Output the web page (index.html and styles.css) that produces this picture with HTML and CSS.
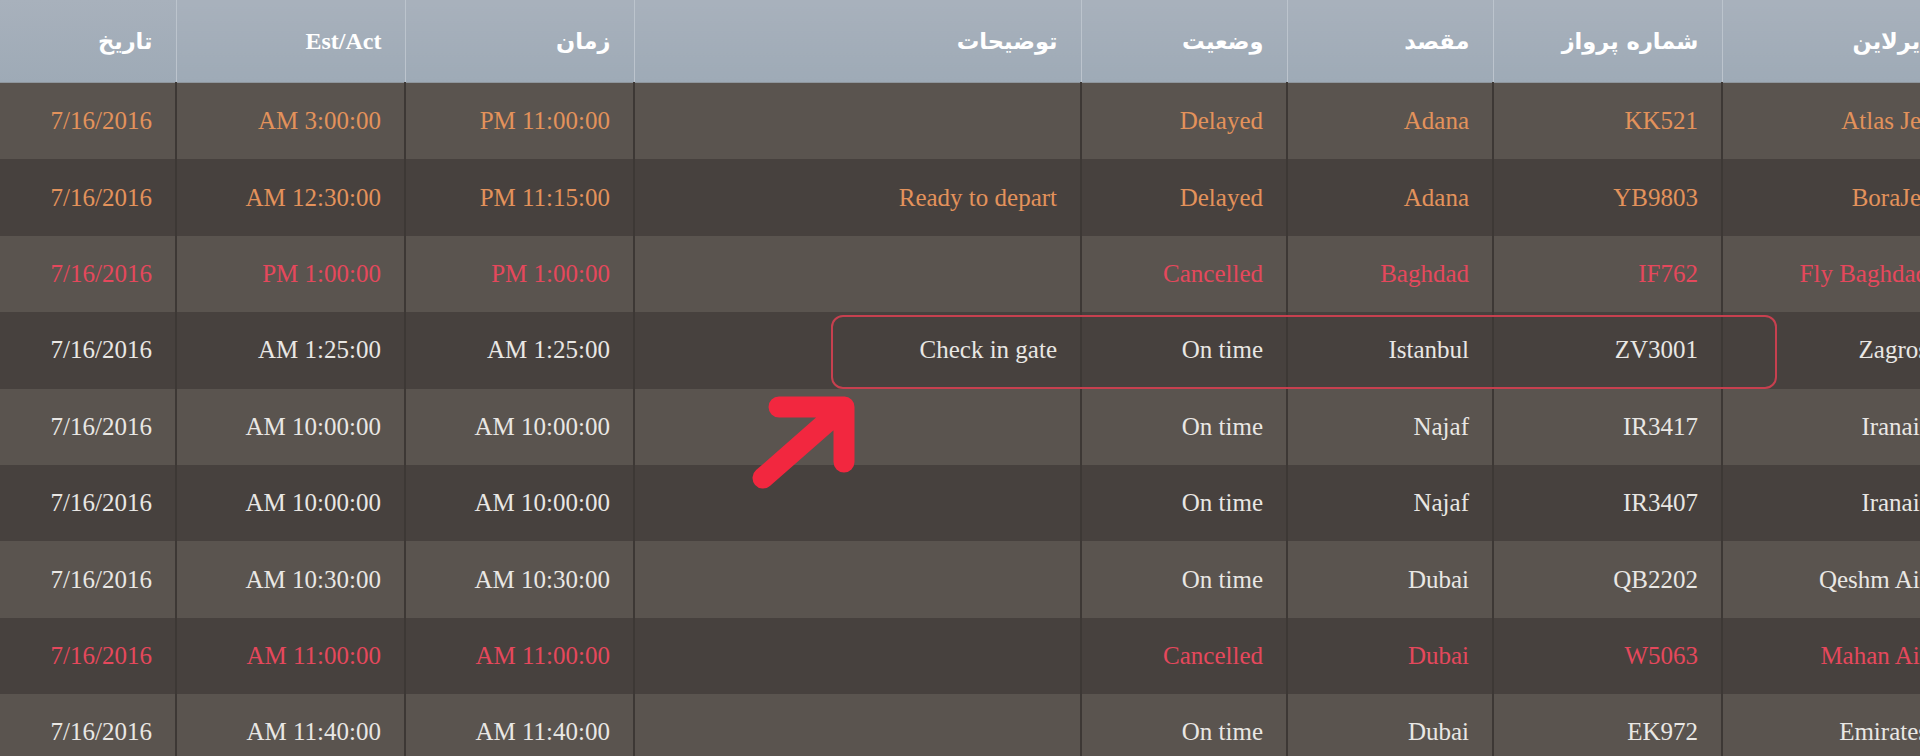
FILE: index.html
```html
<!DOCTYPE html>
<html lang="fa">
<head>
<meta charset="utf-8">
<title>Flights</title>
<link rel="stylesheet" href="styles.css">
</head>
<body>
<div class="board">
  <table class="flights" dir="rtl">
    <colgroup>
      <col class="c-airline"><col class="c-flight"><col class="c-dest"><col class="c-status">
      <col class="c-notes"><col class="c-time"><col class="c-est"><col class="c-date">
    </colgroup>
    <thead>
      <tr>
        <th>ایرلاین</th>
        <th>شماره پرواز</th>
        <th>مقصد</th>
        <th>وضعیت</th>
        <th>توضیحات</th>
        <th>زمان</th>
        <th class="latin">Est/Act</th>
        <th>تاریخ</th>
      </tr>
    </thead>
    <tbody>
      <tr class="light delayed">
        <td>Atlas Jet</td><td>KK521</td><td>Adana</td><td>Delayed</td><td></td><td>PM 11:00:00</td><td>AM 3:00:00</td><td>7/16/2016</td>
      </tr>
      <tr class="dark delayed">
        <td>BoraJet</td><td>YB9803</td><td>Adana</td><td>Delayed</td><td>Ready to depart</td><td>PM 11:15:00</td><td>AM 12:30:00</td><td>7/16/2016</td>
      </tr>
      <tr class="light cancelled">
        <td>Fly Baghdad</td><td>IF762</td><td>Baghdad</td><td>Cancelled</td><td></td><td>PM 1:00:00</td><td>PM 1:00:00</td><td>7/16/2016</td>
      </tr>
      <tr class="dark">
        <td>Zagros</td><td>ZV3001</td><td>Istanbul</td><td>On time</td><td>Check in gate</td><td>AM 1:25:00</td><td>AM 1:25:00</td><td>7/16/2016</td>
      </tr>
      <tr class="light">
        <td>Iranair</td><td>IR3417</td><td>Najaf</td><td>On time</td><td></td><td>AM 10:00:00</td><td>AM 10:00:00</td><td>7/16/2016</td>
      </tr>
      <tr class="dark">
        <td>Iranair</td><td>IR3407</td><td>Najaf</td><td>On time</td><td></td><td>AM 10:00:00</td><td>AM 10:00:00</td><td>7/16/2016</td>
      </tr>
      <tr class="light">
        <td>Qeshm Air</td><td>QB2202</td><td>Dubai</td><td>On time</td><td></td><td>AM 10:30:00</td><td>AM 10:30:00</td><td>7/16/2016</td>
      </tr>
      <tr class="dark cancelled">
        <td>Mahan Air</td><td>W5063</td><td>Dubai</td><td>Cancelled</td><td></td><td>AM 11:00:00</td><td>AM 11:00:00</td><td>7/16/2016</td>
      </tr>
      <tr class="light">
        <td>Emirates</td><td>EK972</td><td>Dubai</td><td>On time</td><td></td><td>AM 11:40:00</td><td>AM 11:40:00</td><td>7/16/2016</td>
      </tr>
    </tbody>
  </table>
  <div class="highlight"></div>
  <svg class="arrow" width="130" height="110" viewBox="0 0 130 110">
    <path d="M39 22 L104 22 L104 77 M104 22 L23 93" fill="none" stroke="#f2273f" stroke-width="21" stroke-linecap="round" stroke-linejoin="round"/>
  </svg>
</div>
</body>
</html>
```
FILE: styles.css
```css
html, body {
  margin: 0;
  padding: 0;
  background: #4f4a47;
  overflow: hidden;
}

.board {
  position: relative;
  width: 1951px;
}

.flights {
  width: 1951px;
  table-layout: fixed;
  border-collapse: collapse;
  border-spacing: 0;
}

.c-airline, .c-flight, .c-est, .c-time { width: 229px; }
.c-dest, .c-status { width: 206px; }
.c-notes { width: 447px; }
.c-date { width: 176px; }

.flights th {
  height: 82px;
  padding: 0 23px 0 8px;
  background: linear-gradient(#a8b1bc, #9eaab6);
  color: #ffffff;
  font-family: "DejaVu Sans", "Noto Sans", sans-serif;
  font-weight: bold;
  font-size: 22.5px;
  text-align: right;
  vertical-align: middle;
  border-left: 1px solid #bcc4cd;
  border-bottom: 1px solid #8f969d;
  white-space: nowrap;
  overflow: hidden;
}

.flights th.latin {
  font-family: "Liberation Serif", "Times New Roman", serif;
  font-size: 24px;
  direction: ltr;
}

.flights td {
  height: 76.4px;
  padding: 0 23px 0 8px;
  direction: ltr;
  text-align: right;
  vertical-align: middle;
  font-family: "Liberation Serif", "Times New Roman", serif;
  font-size: 25px;
  color: #e9e7e4;
  border-left: 2px solid #3d3835;
  white-space: nowrap;
  overflow: hidden;
}

.flights th:last-child,
.flights td:last-child {
  border-left: none;
}

.light td { background: #5a544f; }
.dark td { background: #47413e; }

.delayed td { color: #e3925b; }
.cancelled td { color: #e5485c; }

.highlight {
  position: absolute;
  left: 831px;
  top: 315px;
  width: 942px;
  height: 70px;
  border: 2px solid #c7404f;
  border-radius: 12px;
  pointer-events: none;
}

.arrow {
  position: absolute;
  left: 740px;
  top: 385px;
}
```
